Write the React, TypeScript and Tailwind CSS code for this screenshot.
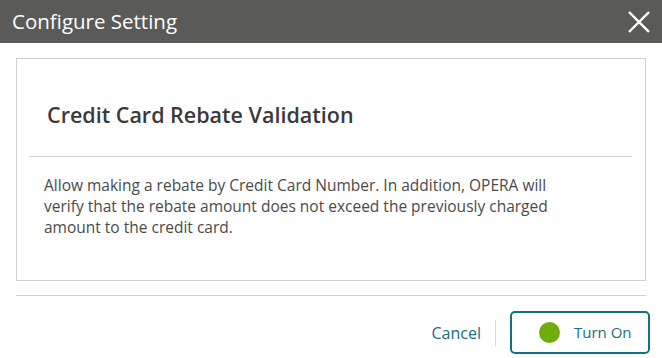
import React from 'react';

const CloseIcon: React.FC<{ className?: string }> = ({ className }) => (
    <svg viewBox="0 0 24 24" className={className} fill="none" stroke="currentColor" strokeWidth={2.6} strokeLinecap="square">
        <path d="M2 2 L22 22 M22 2 L2 22" />
    </svg>
);

const App: React.FC = () => {
    return (
        <div className="w-[662px] h-[358px] bg-white flex flex-col font-['Open_Sans','Noto_Sans',sans-serif]">
            {/* header */}
            <div className="h-[43px] bg-[#5a5a58] flex items-center justify-between pl-[12px] pr-[12px] shrink-0">
                <h1 className="text-white text-[20.5px] leading-none">Configure Setting</h1>
                <button className="text-white" aria-label="Close">
                    <CloseIcon className="w-[22px] h-[22px]" />
                </button>
            </div>

            {/* body */}
            <div className="px-[16px] pt-[15px]">
                <div className="border border-[#cfcfcf] h-[223px] flex flex-col">
                    <h2 className="pl-[30px] pt-[45px] h-[97px] text-[21.5px] font-semibold text-[#3a3a3a] leading-none">Credit Card Rebate Validation</h2>
                    <div className="mx-[13px] border-t border-[#cfcfcf]" />
                    <p className="ml-[27px] w-[520px] pt-[18px] text-[15.5px] leading-[21px] text-[#4a4a4a]">
                        Allow making a rebate by Credit Card Number. In addition, OPERA will verify that the rebate amount does not exceed the previously charged amount to the credit card.
                    </p>
                </div>
                <div className="mt-[14px] border-t border-[#cfcfcf]" />
            </div>

            {/* footer */}
            <div className="flex items-center justify-end pr-[12px] pt-[15px]">
                <button className="text-[#15707d] text-[16px]">Cancel</button>
                <div className="mx-[14px] w-px h-[26px] bg-[#d8d8d8]" />
                <button className="w-[140px] h-[43px] border-2 border-[#127282] rounded-[5px] flex items-center pl-[27px] gap-[14px] text-[#15707d] text-[15px]">
                    <span className="w-[21px] h-[21px] rounded-full bg-[#6fae0a]" />
                    Turn On
                </button>
            </div>
        </div>
    );
};

export default App;
